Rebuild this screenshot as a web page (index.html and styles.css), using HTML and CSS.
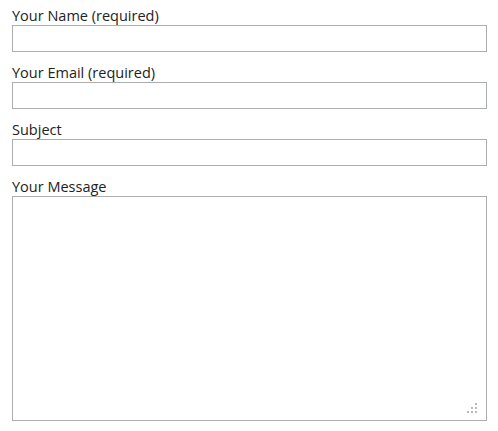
FILE: index.html
```html
<!DOCTYPE html>
<html>
<head>
<meta charset="utf-8">
<link rel="stylesheet" href="styles.css">
</head>
<body>
<form class="form">
  <div class="field">
    <label class="label">Your Name (required)</label>
    <input class="input" type="text">
  </div>
  <div class="field">
    <label class="label">Your Email (required)</label>
    <input class="input" type="text">
  </div>
  <div class="field">
    <label class="label">Subject</label>
    <input class="input" type="text">
  </div>
  <div class="field">
    <label class="label">Your Message</label>
    <div class="area-wrap">
      <textarea class="textarea"></textarea>
      <span class="grip">
        <i class="dot d1"></i><i class="dot d2"></i><i class="dot d3"></i>
        <i class="dot d4"></i><i class="dot d5"></i><i class="dot d6"></i>
      </span>
    </div>
  </div>
</form>
</body>
</html>
```
FILE: styles.css
```css
html, body {
  margin: 0;
  padding: 0;
  background: #fff;
}
body {
  font-family: "Open Sans", sans-serif;
  font-size: 14.5px;
  color: #222;
}
.form {
  padding: 6px 11px 0 12px;
  display: flex;
  flex-direction: column;
  gap: 11px;
}
.field {
  display: flex;
  flex-direction: column;
}
.label {
  line-height: 19px;
  height: 19px;
}
.input, .textarea {
  box-sizing: border-box;
  width: 475px;
  margin: 0;
  border: 1px solid #aaaeae;
  background: #fff;
  font-family: "Open Sans", sans-serif;
  font-size: 14px;
  outline: none;
  border-radius: 0;
  display: block;
}
.input {
  height: 27px;
}
.area-wrap {
  position: relative;
  width: 475px;
}
.textarea {
  height: 225px;
  resize: none;
}
.grip {
  position: absolute;
  right: 8px;
  bottom: 6px;
  width: 12px;
  height: 12px;
}
.dot {
  position: absolute;
  width: 2px;
  height: 2px;
  background: #bbb;
}
.d1 { left: 8px; top: 0; }
.d2 { left: 4px; top: 4px; }
.d3 { left: 8px; top: 4px; }
.d4 { left: 0; top: 8px; }
.d5 { left: 4px; top: 8px; }
.d6 { left: 8px; top: 8px; }
```
